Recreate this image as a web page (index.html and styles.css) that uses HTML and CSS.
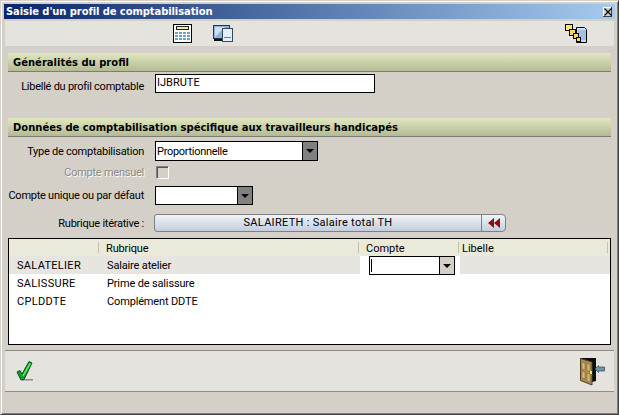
FILE: index.html
```html
<!DOCTYPE html>
<html lang="fr">
<head>
<meta charset="utf-8">
<title>Saisie d'un profil de comptabilisation</title>
<link rel="stylesheet" href="styles.css">
</head>
<body>
<div class="window">
  <div class="titlebar">
    <span class="title">Saisie d'un profil de comptabilisation</span>
    <span class="close"><svg width="8" height="8" viewBox="0 0 8 8"><path d="M.5 .5L7.500 7.500M7.500 .5L.5 7.500" stroke="#000" stroke-width="1.100" fill="none"/></svg></span>
  </div>
  <div class="toolbar">
    <svg class="tool-calc" width="19" height="19" viewBox="0 0 19 19">
      <rect x=".5" y=".5" width="18" height="18" fill="#fff" stroke="#000"/>
      <rect x="3.500" y="2.500" width="12" height="3" fill="#f6e9a8" stroke="#222"/>
      <path d="M2 8h3v2H2zM6 8h3v2H6zM10 8h3v2h-3zM14 8h3v2h-3zM2 11h3v2H2zM6 11h3v2H6zM10 11h3v2h-3zM14 11h3v2h-3zM2 14h3v2H2zM6 14h3v2H6zM10 14h3v2h-3zM14 14h3v2h-3z" fill="#6fa0c8"/>
    </svg>
    <svg class="tool-win" width="20" height="17" viewBox="0 0 20 17">
      <rect x=".5" y=".5" width="16" height="13" fill="#8fb0d8" stroke="#23364a"/>
      <path d="M2 12L12 2H2z" fill="#d0e0f2"/>
      <path d="M1 14h8v2H1z" fill="#111"/>
      <rect x="9.500" y="3.500" width="10" height="13" fill="#e8eef6" stroke="#2e4a60"/>
      <path d="M11 12h7v1h-7z" fill="#5a86b4"/>
    </svg>
    <svg class="tool-link" width="22" height="20" viewBox="0 0 22 20">
      <path d="M11.500 3.500h8l2 2v13h-10z" fill="#c9dcf2" stroke="#000"/>
      <path d="M13 7h8M13 9h8M13 11h8M13 13h8M13 15h8" stroke="#7fa6d0"/>
      <rect x=".5" y=".5" width="7" height="6" fill="#fbe96a" stroke="#000"/>
      <rect x="4.500" y="5.500" width="6" height="6" fill="#f8d860" stroke="#000"/>
      <rect x="8.500" y="9.500" width="5" height="5" fill="#f8d860" stroke="#000"/>
      <rect x="11.500" y="13.500" width="4" height="4" fill="#f8d860" stroke="#000"/>
    </svg>
  </div>
  <div class="content">
    <h2 class="band">Généralités du profil</h2>
    <div class="row row-libelle">
      <label class="label">Libellé du profil comptable</label>
      <div class="input input-libelle">IJBRUTE</div>
    </div>
    <h2 class="band band-second">Données de comptabilisation spécifique aux travailleurs handicapés</h2>
    <div class="row row-type">
      <label class="label">Type de comptabilisation</label>
      <div class="combo combo-type">
        <span class="combo-value">Proportionnelle</span>
        <span class="combo-btn"><i class="arrow"></i></span>
      </div>
    </div>
    <div class="row row-mensuel">
      <label class="label label-off">Compte mensuel</label>
      <span class="check"></span>
    </div>
    <div class="row row-unique">
      <label class="label">Compte unique ou par défaut</label>
      <div class="combo combo-unique">
        <span class="combo-value"></span>
        <span class="combo-btn"><i class="arrow"></i></span>
      </div>
    </div>
    <div class="row row-rubrique">
      <label class="label">Rubrique itérative :</label>
      <div class="pick">
        <span class="pick-text">SALAIRETH : Salaire total TH</span>
        <span class="pick-btn"><svg width="12" height="10" viewBox="0 0 12 10"><path d="M6 0v10L0 5zM12 0v10L6 5z" fill="#8c0f12"/></svg></span>
      </div>
    </div>
    <div class="table">
      <div class="thead">
        <span class="c1"></span>
        <span class="c2 sep">Rubrique</span>
        <span class="c3 sep">Compte</span>
        <span class="c4 sep">Libelle</span>
      </div>
      <div class="tr tr-sel">
        <span class="c1">SALATELIER</span>
        <span class="c2">Salaire atelier</span>
        <span class="c3 cell-edit">
          <span class="combo combo-cell">
            <span class="combo-value caret"></span>
            <span class="combo-btn combo-btn-light"><i class="arrow"></i></span>
          </span>
        </span>
        <span class="c4"></span>
      </div>
      <div class="tr">
        <span class="c1">SALISSURE</span>
        <span class="c2">Prime de salissure</span>
      </div>
      <div class="tr">
        <span class="c1">CPLDDTE</span>
        <span class="c2">Complément DDTE</span>
      </div>
    </div>
  </div>
  <div class="footer">
    <svg width="17" height="20" viewBox="0 0 17 20">
      <path d="M6 18h11v1.500H6z" fill="#8a8a8a"/>
      <path d="M1 11L4 9.500L6 13L13 .5L16 2L8 18.500L5 19z" fill="#0fa024" stroke="#05501a" stroke-width="1"/>
      <path d="M13.500 2L15 2.800L7.500 15.500L6.500 14.500z" fill="#74e27e"/>
    </svg>
    <svg class="door" width="25" height="28" viewBox="0 0 25 28">
      <path d="M0 0H16V23L12 24z" fill="#0c0c0c"/>
      <path d="M.5 .5L12 4V27L.5 22.500z" fill="#a98a52" stroke="#4e4028"/>
      <path d="M2 4l3 1v7l-3-1zM7 5.500l3 1v7l-3-1zM2 13l3 1v7l-3-1zM7 15l3 1v8l-3-1z" fill="#d3b67c" stroke="#7a6238" stroke-width=".5"/>
      <rect x="10" y="13" width="2" height="3" fill="#f4ec20"/>
      <path d="M15 11L18.500 7.500V9H24.500V13H18.500V14.500z" fill="#6a94ae" stroke="#30485a" stroke-width=".7"/>
    </svg>
  </div>
</div>
</body>
</html>
```
FILE: styles.css
```css
* { box-sizing: border-box; }
html, body { margin: 0; padding: 0; }
body {
  width: 619px;
  height: 415px;
  overflow: hidden;
  font-family: Roboto, "Liberation Sans", Arial, sans-serif;
  font-size: 11px;
  color: #000;
  background: #d4d0c8;
}
.window {
  width: 619px;
  height: 415px;
  display: flex;
  flex-direction: column;
  background: #d4d0c8;
  border-style: solid;
  border-width: 1px;
  border-color: #d4d0c8 #404040 #404040 #d4d0c8;
  box-shadow: inset 1px 1px 0 #fff, inset -1px -1px 0 #808080;
  padding: 3px;
}
.titlebar {
  height: 15px;
  flex: none;
  display: flex;
  align-items: center;
  justify-content: space-between;
  padding: 0 3px 0 2px;
  background: linear-gradient(90deg, #0a246a, #a6caf0);
}
.title {
  color: #fff;
  font-family: "DejaVu Sans", sans-serif;
  font-size: 10px;
  font-weight: bold;
  letter-spacing: -0.1px;
}
.close {
  width: 9px;
  height: 10px;
  background: #d4d0c8;
  box-shadow: inset -1px -1px 0 #404040, inset 1px 1px 0 #fff;
  display: flex;
  align-items: center;
  justify-content: center;
}
.toolbar {
  height: 25px;
  flex: none;
  margin: 2px 1px 0;
  background: #e4e3de;
  display: flex;
  align-items: center;
  padding-left: 168px;
}
.tool-calc { margin-right: 21px; }
.tool-win { margin-right: 332px; }
.content {
  flex: 1;
  display: flex;
  flex-direction: column;
  padding: 7px 4px 0;
}
.band {
  margin: 0;
  height: 19px;
  flex: none;
  padding: 0 0 0 5px;
  font-family: "DejaVu Sans", sans-serif;
  font-size: 10px;
  line-height: 20px;
  font-weight: bold;
  background: linear-gradient(#e1e7bf, #b3bb95);
  border-bottom: 1px solid #7d7d72;
}
.band-second { margin-top: 25px; }
.row { display: flex; align-items: center; flex: none; }
.label {
  width: 136px;
  flex: none;
  margin-right: 11px;
  text-align: right;
  white-space: nowrap;
  letter-spacing: -0.25px;
}
.label-off { color: #8a8a86; text-shadow: 1px 1px 0 #fff; }
.row-libelle { margin-top: 2px; height: 19px; }
.row-libelle .label { padding-top: 5px; }
.input {
  height: 19px;
  background: #fff;
  border: 1px solid #000;
  padding-left: 1px;
  line-height: 16px;
}
.input-libelle { width: 220px; }
.row-type { margin-top: 4px; height: 20px; }
.row-mensuel { margin-top: 5px; height: 13px; }
.row-unique { margin-top: 7px; height: 19px; }
.row-rubrique { margin-top: 9px; height: 18px; }
.combo {
  display: flex;
  background: #fff;
  border: 1px solid #000;
  height: 19px;
}
.combo-type { width: 163px; height: 20px; }
.combo-unique { width: 98px; }
.combo-value { flex: 1; padding-left: 1px; line-height: 19px; letter-spacing: -0.3px; }
.combo-btn {
  width: 15px;
  background: #808080;
  border-left: 1px solid #000;
  display: flex;
  align-items: center;
  justify-content: center;
}
.combo-btn-light { background: #d4d0c8; }
.arrow {
  width: 0;
  height: 0;
  border-left: 4px solid transparent;
  border-right: 4px solid transparent;
  border-top: 4px solid #000;
}
.check {
  width: 13px;
  height: 13px;
  margin-left: 1px;
  background: #d4d0c8;
  border: 1px solid;
  border-color: #808080 #fff #fff #808080;
  box-shadow: inset 1px 1px 0 #555;
}
.pick {
  width: 352px;
  height: 18px;
  margin-left: -1px;
  display: flex;
  border: 1px solid #808080;
  border-radius: 3px 4px 4px 3px;
  background: linear-gradient(#f1f4f9, #c3cedd);
}
.pick-text { flex: 1; text-align: center; line-height: 16px; letter-spacing: 0.3px; }
.pick-btn {
  width: 24px;
  flex: none;
  border-left: 1px solid #808080;
  display: flex;
  align-items: center;
  justify-content: center;
}
.table {
  margin-top: 6px;
  height: 107px;
  flex: none;
  background: #fff;
  border: 1px solid #000;
}
.thead, .tr { display: flex; }
.thead { height: 17px; background: #ebe9d9; line-height: 20px; }
.tr { height: 18px; line-height: 19px; }
.tr-sel { background: #e6e5e0; }
.c1 { width: 89px; padding-left: 8px; flex: none; letter-spacing: 0.3px; }
.c2 { width: 260px; padding-left: 9px; flex: none; letter-spacing: -0.15px; }
.c3 { width: 100px; padding-left: 9px; flex: none; }
.c4 { flex: 1; padding-left: 4px; }
.sep { position: relative; }
.sep::before {
  content: "";
  position: absolute;
  left: 0;
  top: 3px;
  height: 11px;
  width: 1px;
  background: #c4c2b4;
}
.c2.sep { padding-left: 8px; }
.c3.sep { padding-left: 8px; }
.c4.sep::after {
  content: "";
  position: absolute;
  right: 2px;
  top: 3px;
  height: 11px;
  width: 1px;
  background: #c4c2b4;
}
.cell-edit { background: #fff; height: 18px; margin-left: 2px; }
.combo-cell { width: 86px; height: 19px; }
.caret { border-left: 1px solid #000; margin: 2px 0 2px 1px; }
.footer {
  flex: none;
  height: 42px;
  margin: 5px 1px 20px;
  background: #e4e3de;
  border-top: 1px solid #8c8c8a;
  border-bottom: 1px solid #8c8c8a;
  display: flex;
  align-items: center;
  justify-content: space-between;
  padding: 0 9px 0 11px;
}
.door { margin-top: 2px; }
```
